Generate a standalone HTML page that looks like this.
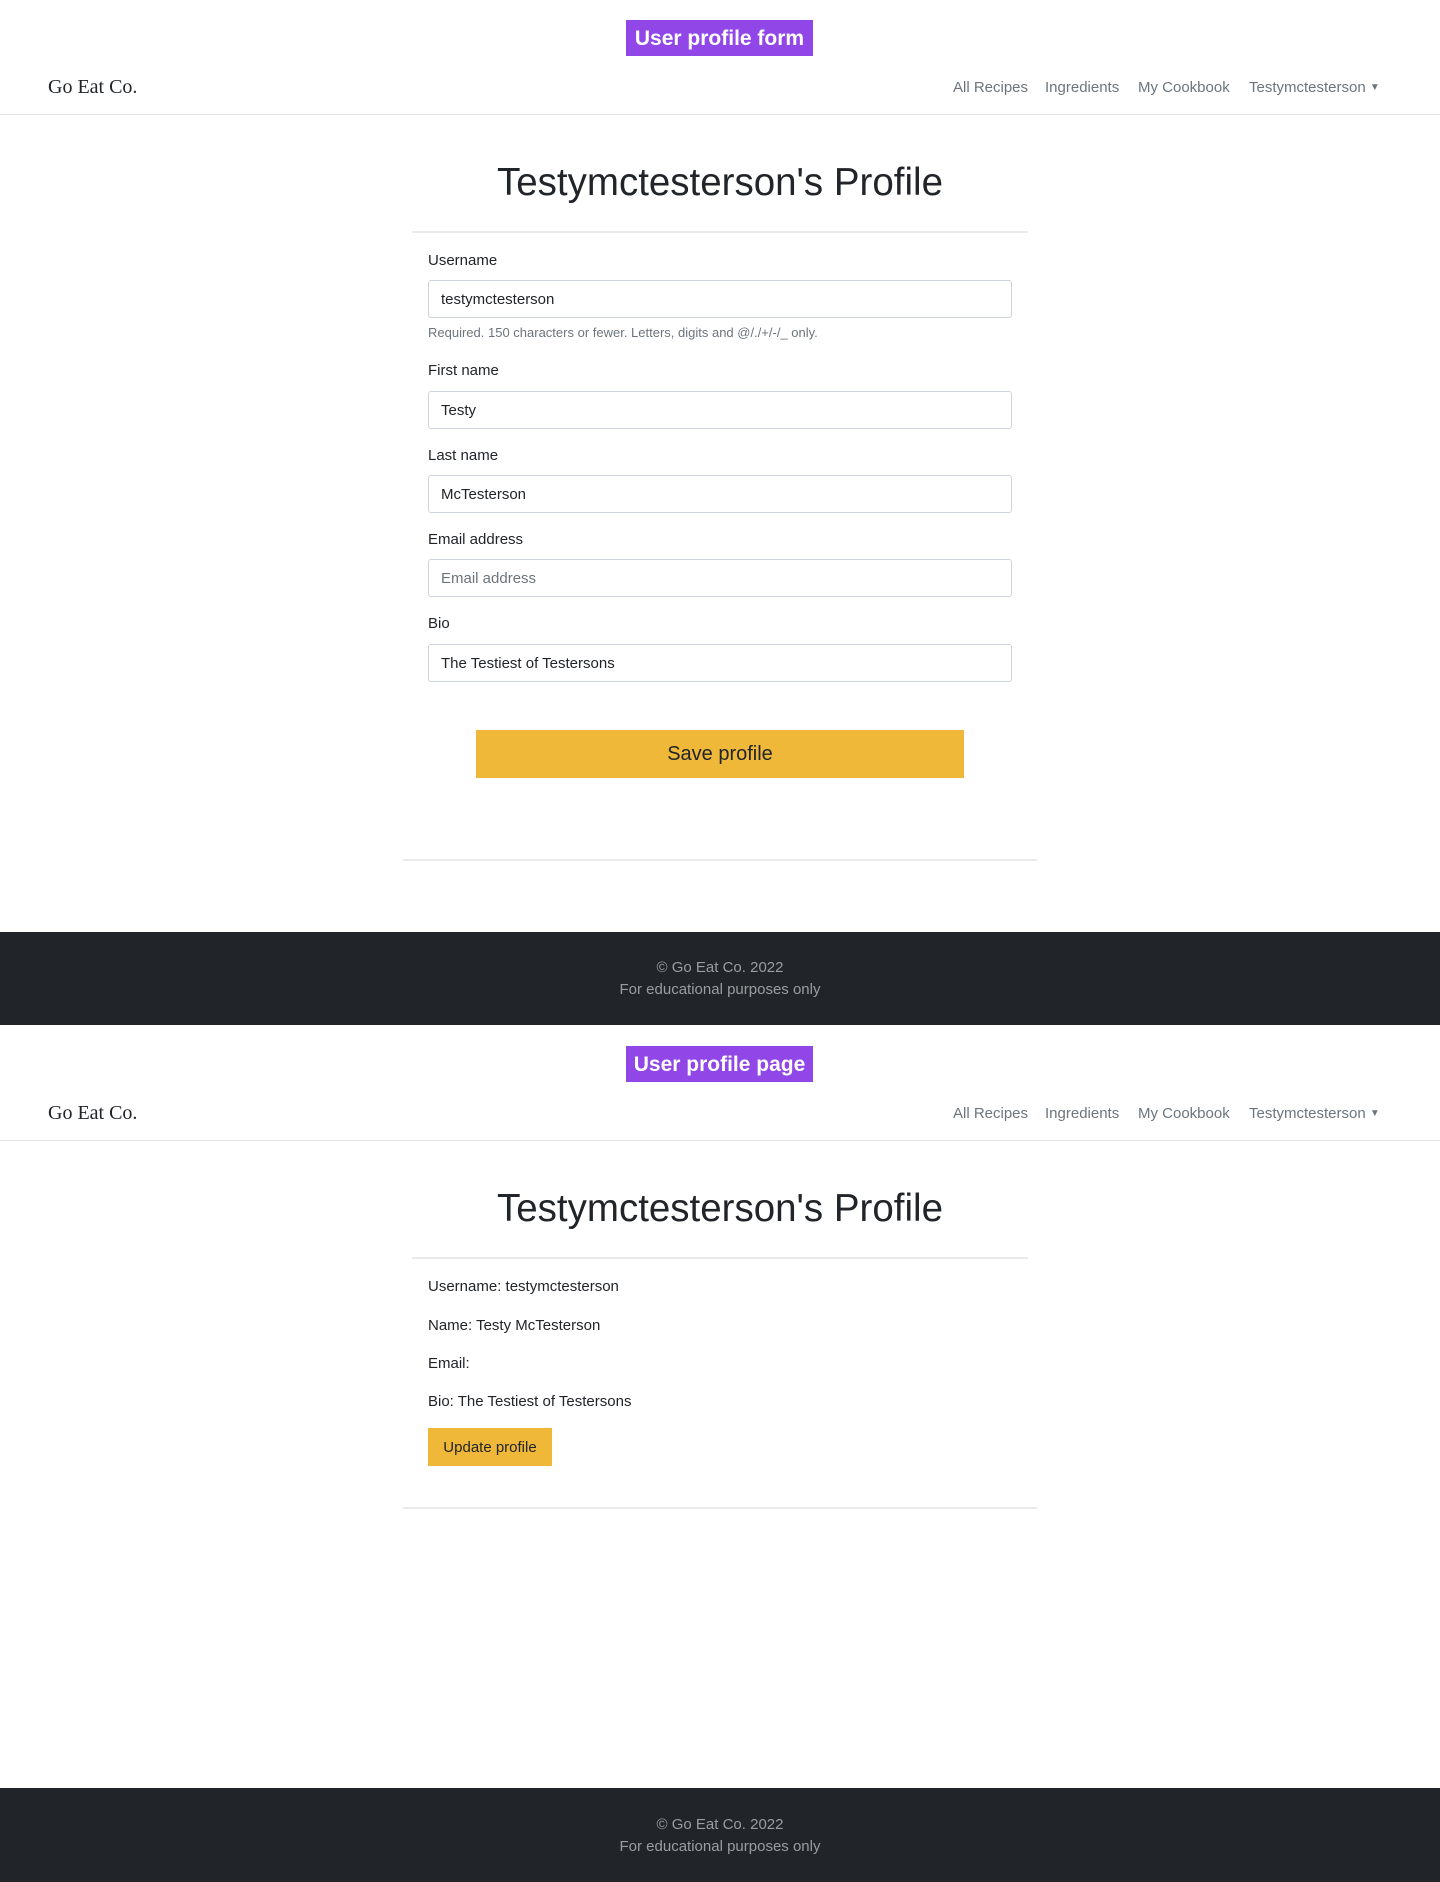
<!DOCTYPE html>
<html><head><meta charset="utf-8"><style>
*{margin:0;padding:0;box-sizing:border-box}
body{width:1440px;height:1882px;position:relative;background:#fff;font-family:"Liberation Sans",sans-serif;color:#212529;overflow:hidden}
.a{position:absolute;white-space:nowrap}
.tag{background:#9146e8;color:#fff;font-size:21px;font-weight:bold;left:626px;width:187px;height:36px;line-height:37px;text-align:center;overflow:hidden}
.brand{left:48px;font-family:"Liberation Serif",serif;font-size:20px;color:#212529}
.nav{font-size:15px;color:#6c757d}
.line{left:0;width:1440px;height:1px;background:#e3e3e3}
.h1{left:0;width:1440px;text-align:center;font-size:38.5px;font-weight:300;color:#212529}
.hr{height:2px;background:#eaeaea}
.lbl{left:428px;font-size:15px}
.inp{left:428px;width:584px;height:38px;border:1px solid #ced4da;border-radius:3px;font-size:15px;line-height:37px;padding-left:12px}
.foot{left:0;width:1440px;background:#212529;color:#9a9da0;text-align:center;font-size:15px;line-height:22px}
</style></head><body>
<div class="a tag" style="top:20px">User profile form</div>
<div class="a brand" style="top:76px">Go Eat Co.</div>
<div class="a nav" style="left:953px;top:79px">All Recipes</div>
<div class="a nav" style="left:1045px;top:79px">Ingredients</div>
<div class="a nav" style="left:1138px;top:79px">My Cookbook</div>
<div class="a nav" style="left:1249px;top:79px">Testymctesterson <span style="font-size:10px;vertical-align:2px">▼</span></div>
<div class="a line" style="top:114px"></div>
<div class="a h1" style="top:161px">Testymctesterson's Profile</div>
<div class="a hr" style="top:231px;left:412px;width:616px"></div>
<div class="a lbl" style="top:252px">Username</div>
<div class="a inp" style="top:280px">testymctesterson</div>
<div class="a" style="left:428px;top:325px;font-size:13px;color:#6c757d">Required. 150 characters or fewer. Letters, digits and @/./+/-/_ only.</div>
<div class="a lbl" style="top:362px">First name</div>
<div class="a inp" style="top:391px">Testy</div>
<div class="a lbl" style="top:447px">Last name</div>
<div class="a inp" style="top:475px">McTesterson</div>
<div class="a lbl" style="top:531px">Email address</div>
<div class="a inp" style="top:559px;color:#6c757d">Email address</div>
<div class="a lbl" style="top:615px">Bio</div>
<div class="a inp" style="top:644px">The Testiest of Testersons</div>
<div class="a" style="left:476px;top:730px;width:488px;height:48px;background:#f0b838;text-align:center;line-height:49px;font-size:20px">Save profile</div>
<div class="a hr" style="top:859px;left:403px;width:634px"></div>
<div class="a foot" style="top:932px;height:93px;padding-top:25px">© Go Eat Co. 2022<br>For educational purposes only</div>

<div class="a tag" style="top:1046px">User profile page</div>
<div class="a brand" style="top:1102px">Go Eat Co.</div>
<div class="a nav" style="left:953px;top:1105px">All Recipes</div>
<div class="a nav" style="left:1045px;top:1105px">Ingredients</div>
<div class="a nav" style="left:1138px;top:1105px">My Cookbook</div>
<div class="a nav" style="left:1249px;top:1105px">Testymctesterson <span style="font-size:10px;vertical-align:2px">▼</span></div>
<div class="a line" style="top:1140px"></div>
<div class="a h1" style="top:1187px">Testymctesterson's Profile</div>
<div class="a hr" style="top:1257px;left:412px;width:616px"></div>
<div class="a lbl" style="top:1278px">Username: testymctesterson</div>
<div class="a lbl" style="top:1317px">Name: Testy McTesterson</div>
<div class="a lbl" style="top:1355px">Email:</div>
<div class="a lbl" style="top:1393px">Bio: The Testiest of Testersons</div>
<div class="a" style="left:428px;top:1428px;width:124px;height:38px;background:#f0b838;text-align:center;line-height:39px;font-size:15px">Update profile</div>
<div class="a hr" style="top:1507px;left:403px;width:634px"></div>
<div class="a foot" style="top:1788px;height:94px;padding-top:26px">© Go Eat Co. 2022<br>For educational purposes only</div>
</body></html>
